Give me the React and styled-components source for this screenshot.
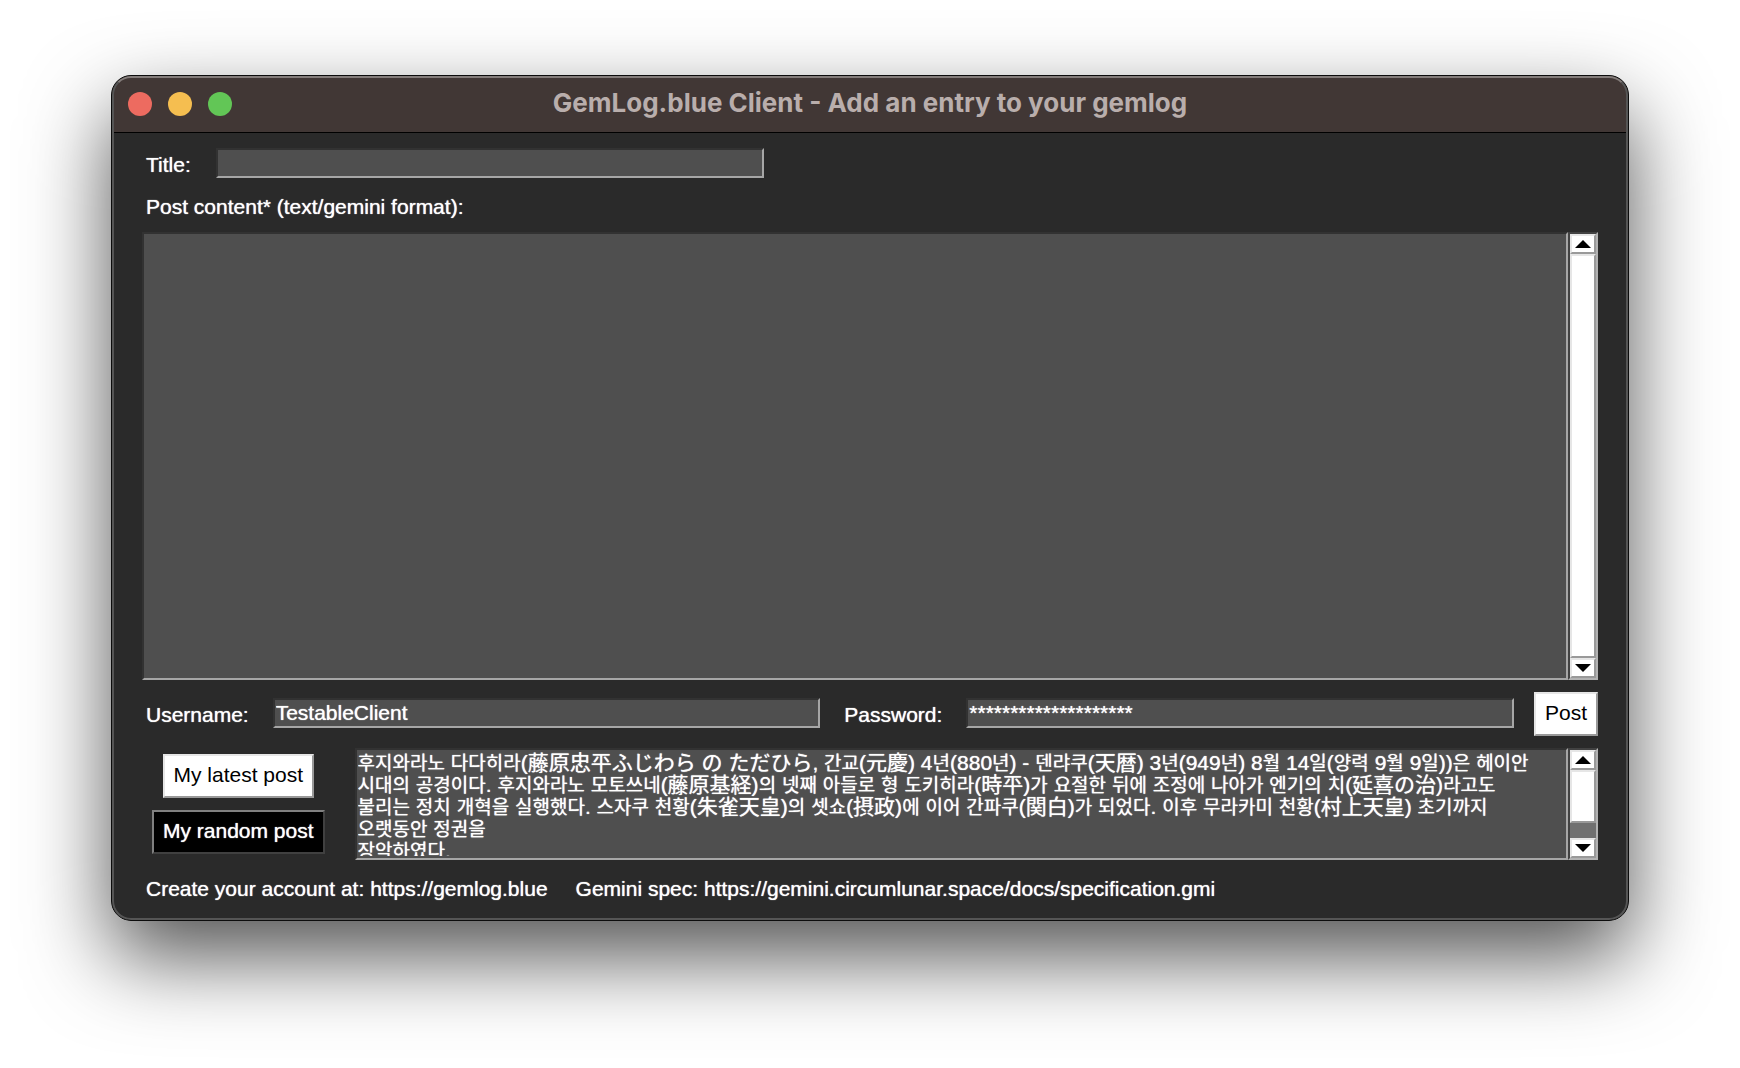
import React, { useState } from "react";
import styled, { createGlobalStyle, css } from "styled-components";

const GlobalStyle = createGlobalStyle`
  * { box-sizing: border-box; }
  body {
    margin: 0;
    background: #fff;
    color: #fff;
    font: 21px/26px "Liberation Sans", "Noto Sans CJK KR", sans-serif;
    text-shadow: 0 0 1px currentColor;
  }
  button, input, textarea { font: inherit; border-radius: 0; outline: 0; text-shadow: inherit; }
`;

const sunken = css`
  border: 2px solid;
  border-color: #323232 #a6a6a6 #a6a6a6 #323232;
  background: #4f4f4f;
  color: #fff;
`;

const Desktop = styled.main`
  min-height: 100vh;
  padding: 75px 111px;
`;

const Window = styled.section`
  position: relative;
  overflow: hidden;
  border: 1px solid #0c0c0c;
  border-radius: 20px;
  background: #2a2a2a;
`;

const Shadow = styled.div`
  border-radius: 20px;
  box-shadow: 0 36px 84px rgba(0, 0, 0, 0.68);
`;

const Rim = styled.div`
  position: absolute;
  inset: 0;
  border: 2px solid #555;
  border-top-color: #847d7b;
  border-radius: 19px;
  pointer-events: none;
`;

const TitleBar = styled.header`
  display: grid;
  grid-template-columns: 1fr auto 1fr;
  align-items: center;
  height: 57px;
  padding: 0 16px;
  border-bottom: 1px solid #000;
  background: #413735;
`;

const Lights = styled.div`
  display: flex;
  gap: 16px;
`;

const Light = styled.button`
  width: 24px;
  height: 24px;
  padding: 0;
  border: 0;
  border-radius: 50% !important;
  background: ${(p) => p.$color};
`;

const Heading = styled.h1`
  margin: 0;
  padding-bottom: 2px;
  color: #b9aeac;
  font: 700 26px/30px Inter, sans-serif;
  text-shadow: none;
`;

const Form = styled.form`
  display: flex;
  flex-direction: column;
  gap: 12px;
  padding: 15px 30px 18px;
`;

const Row = styled.div`
  display: flex;
  align-items: center;
  justify-content: space-between;
`;

const Fields = styled.div`
  display: flex;
  flex: 1;
  gap: 24px;
  margin-right: 20px;
  padding: 0 0 2px 4px;
`;

const Label = styled.label`
  min-width: 46px;
  padding-top: 4px;
  white-space: nowrap;
`;

const BlockLabel = styled.label`
  padding: 2px 0 0 4px;
`;

const Entry = styled.input`
  ${sunken}
  flex: 0 1 548px;
  min-width: 0;
  height: 30px;
  padding: 0 1px;
  line-height: 24px;
`;

const Pane = styled.div`
  display: flex;
  flex: 1;
  min-width: 0;
  height: ${(p) => p.$height}px;
`;

const Editor = styled.textarea`
  ${sunken}
  flex: 1;
  padding: 2px;
  resize: none;
`;

const Reader = styled.div`
  ${sunken}
  flex: 1;
  overflow: hidden;
  padding: 2px 1px;
  line-height: 22px;
`;

const ReaderText = styled.p`
  height: 104px;
  margin: 0;
  overflow: hidden;
  white-space: pre;
`;

const Hangul = styled.span`
  font-size: 19px;
  line-height: 16px;
`;

const raised = css`
  border: 2px solid;
  border-color: #e6e6e6 #999 #999 #e6e6e6;
  background: #fff;
`;

const Bar = styled.div`
  display: flex;
  flex-direction: column;
  width: 30px;
  border: 2px solid;
  border-color: #424242 #b2b2b2 #b2b2b2 #424242;
  background: #707070;
`;

const Arrow = styled.button`
  ${raised}
  display: flex;
  align-items: center;
  justify-content: center;
  flex: none;
  height: 20px;
  padding: 0;
`;

const Thumb = styled.div`
  ${raised}
  flex: ${(p) => p.$share};
`;

const Rest = styled.div`
  flex: ${(p) => p.$share};
`;

const PushButton = styled.button`
  height: 44px;
  padding: 0 9px 2px;
  border: 2px solid;
  border-color: ${(p) => (p.$dark ? "#808080 #404040 #404040 #808080" : "#e6e6e6 #999 #999 #e6e6e6")};
  background: ${(p) => (p.$dark ? "#000" : "#fff")};
  color: ${(p) => (p.$dark ? "#fff" : "#000")};
  text-shadow: ${(p) => (p.$dark ? "inherit" : "none")};
  white-space: nowrap;
`;

const Actions = styled.div`
  display: flex;
  flex-direction: column;
  align-items: center;
  gap: 12px;
  margin-right: 30px;
  padding-left: 10px;
`;

const Footer = styled.footer`
  display: flex;
  gap: 28px;
  padding: 4px 0 0 4px;
`;

const Link = styled.a`
  color: inherit;
  text-decoration: none;
`;

const ENTRY_TEXT = [
  "후지와라노 다다히라(藤原忠平ふじわら の ただひら, 간교(元慶) 4년(880년) - 덴랴쿠(天暦) 3년(949년) 8월 14일(양력 9월 9일))은 헤이안",
  "시대의 공경이다. 후지와라노 모토쓰네(藤原基経)의 넷째 아들로 형 도키히라(時平)가 요절한 뒤에 조정에 나아가 엔기의 치(延喜の治)라고도",
  "불리는 정치 개혁을 실행했다. 스자쿠 천황(朱雀天皇)의 셋쇼(摂政)에 이어 간파쿠(関白)가 되었다. 이후 무라카미 천황(村上天皇) 초기까지",
  "오랫동안 정권을",
  "장악하였다.",
].join("\n");

function MixedText({ text }) {
  return text
    .split(/([가-힣]+)/)
    .map((part, i) => (i % 2 ? <Hangul key={i}>{part}</Hangul> : part));
}

function Scrollbar({ thumb = 1, rest = 0 }) {
  return (
    <Bar>
      <Arrow type="button" aria-label="Scroll up">
        <svg width="16" height="8" viewBox="0 0 16 8"><path d="M8 0 16 8H0Z" /></svg>
      </Arrow>
      <Thumb $share={thumb} />
      {rest > 0 && <Rest $share={rest} />}
      <Arrow type="button" aria-label="Scroll down">
        <svg width="16" height="8" viewBox="0 0 16 8"><path d="M0 0H16L8 8Z" /></svg>
      </Arrow>
    </Bar>
  );
}

export default function App() {
  const [title, setTitle] = useState("");
  const [content, setContent] = useState("");
  const [user, setUser] = useState("TestableClient");
  const [password, setPassword] = useState("*".repeat(20));

  return (
    <Desktop>
      <GlobalStyle />
      <Shadow>
        <Window>
          <TitleBar>
            <Lights>
              <Light $color="#ed6b60" aria-label="Close" />
              <Light $color="#f5be50" aria-label="Minimize" />
              <Light $color="#62c656" aria-label="Zoom" />
            </Lights>
            <Heading>GemLog.blue Client - Add an entry to your gemlog</Heading>
          </TitleBar>
          <Form onSubmit={(e) => e.preventDefault()}>
            <Row>
              <Fields>
                <Label htmlFor="title">Title:</Label>
                <Entry id="title" value={title} onChange={(e) => setTitle(e.target.value)} />
              </Fields>
            </Row>
            <BlockLabel htmlFor="content">Post content* (text/gemini format):</BlockLabel>
            <Row>
              <Pane $height={448}>
                <Editor id="content" value={content} onChange={(e) => setContent(e.target.value)} />
                <Scrollbar />
              </Pane>
            </Row>
            <Row>
              <Fields>
                <Label htmlFor="user">Username:</Label>
                <Entry id="user" value={user} onChange={(e) => setUser(e.target.value)} />
                <Label htmlFor="password">Password:</Label>
                <Entry id="password" value={password} onChange={(e) => setPassword(e.target.value)} />
              </Fields>
              <PushButton type="submit">Post</PushButton>
            </Row>
            <Row>
              <Actions>
                <PushButton type="button">My latest post</PushButton>
                <PushButton type="button" $dark>My random post</PushButton>
              </Actions>
              <Pane $height={112}>
                <Reader>
                  <ReaderText lang="ko"><MixedText text={ENTRY_TEXT} /></ReaderText>
                </Reader>
                <Scrollbar thumb={13} rest={4} />
              </Pane>
            </Row>
            <Footer>
              <span>Create your account at: <Link href="https://gemlog.blue">https://gemlog.blue</Link></span>
              <span>Gemini spec: <Link href="https://gemini.circumlunar.space/docs/specification.gmi">https://gemini.circumlunar.space/docs/specification.gmi</Link></span>
            </Footer>
          </Form>
          <Rim />
        </Window>
      </Shadow>
    </Desktop>
  );
}
